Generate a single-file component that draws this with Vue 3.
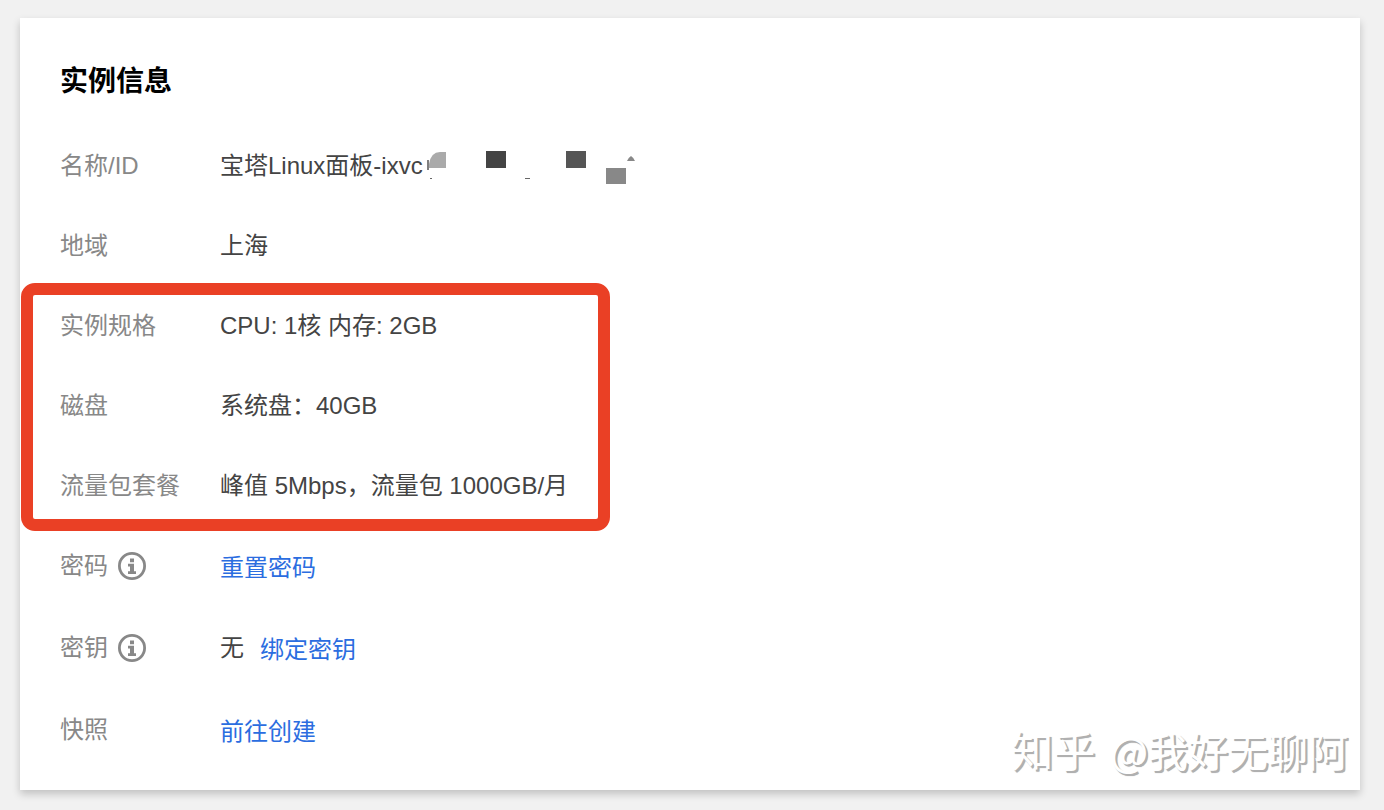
<template>
  <main class="page">
    <section class="instance-card">
      <h2>实例信息</h2>

      <div class="info-list">
        <dl v-for="(group, index) in groups" :key="index" class="info-group" :class="{ highlighted: group.highlighted }">
          <div v-for="item in group.items" :key="item.label" class="info-row">
            <dt>
              <span>{{ item.label }}</span>
              <button v-if="item.tip" type="button" class="btn-tip" :aria-label="`${item.label}说明`">
                <svg viewBox="0 0 28 28" width="28" height="28" aria-hidden="true">
                  <circle cx="14" cy="14" r="12.6" fill="none" stroke="currentColor" stroke-width="2.8" />
                  <path d="M12 6.500h4v3.800h-4zM10 11.800h6v7.400h2V22h-8v-2.800h2v-4.600h-2z" fill="currentColor" />
                </svg>
              </button>
            </dt>
            <dd>
              <span v-if="item.value">{{ item.value }}</span>
              <!-- 打码的实例 ID -->
              <svg v-if="item.masked" class="mask" viewBox="1 1 212 40" width="212" height="40" aria-hidden="true">
                <path d="M2 15v10" stroke="#555" stroke-width="1.5" />
                <path d="M3 23V19Q5 7 14 7h6v16z" fill="#aaa" />
                <path d="M60 6h20v17H60z" fill="#444" />
                <path d="M140 6h20v17h-20z" fill="#555" />
                <path d="M180 23h20v16h-20z" fill="#888" />
                <path d="M201 16q1-3 4-5q3 2 4 5z" fill="#888" />
                <path d="M4 33.500h2M99 33.500h5" stroke="#666" stroke-width="1" />
              </svg>
              <a v-if="item.link" href="#">{{ item.link }}</a>
            </dd>
          </div>
        </dl>
      </div>

      <div class="watermark"><span class="brand">知乎</span> @我好无聊阿</div>
    </section>
  </main>
</template>

<script setup>
const groups = [
  {
    items: [
      { label: '名称/ID', value: '宝塔Linux面板-ixvc', masked: true },
      { label: '地域', value: '上海' }
    ]
  },
  {
    highlighted: true,
    items: [
      { label: '实例规格', value: 'CPU: 1核 内存: 2GB' },
      { label: '磁盘', value: '系统盘：40GB' },
      { label: '流量包套餐', value: '峰值 5Mbps，流量包 1000GB/月' }
    ]
  },
  {
    items: [
      { label: '密码', tip: true, link: '重置密码' },
      { label: '密钥', tip: true, value: '无', link: '绑定密钥' },
      { label: '快照', link: '前往创建' }
    ]
  }
]
</script>

<style>
body {
  background: #f1f1f1;
}
</style>

<style scoped>
.page {
  padding: 18px 24px 20px 20px;
  font-family: "Liberation Sans", "Noto Sans CJK SC", sans-serif;
  font-size: 24px;
  line-height: 40px;
  color: #444;
}

.instance-card {
  position: relative;
  padding: 44px 40px 38px;
  background: white;
  box-shadow: 0 4px 8px rgba(0, 0, 0, 0.2);
}

h2 {
  margin: 0 0 44px;
  color: #000;
  font-size: 28px;
  font-weight: 700;
  line-height: 40px;
}

.info-list,
.info-group {
  display: flex;
  flex-direction: column;
  gap: 40px;
  margin: 0;
}

.info-group {
  position: relative;
}

/* 红色标注框 */
.highlighted::before {
  content: "";
  position: absolute;
  top: -23px;
  bottom: -25px;
  left: -39px;
  width: 589px;
  box-sizing: border-box;
  border: 12px solid #ea4025;
  border-radius: 14px;
  pointer-events: none;
}

.info-row {
  display: grid;
  grid-template-columns: 160px 1fr;
  align-items: start;
}

dt {
  display: flex;
  align-items: center;
  gap: 10px;
  color: #888;
}

dd {
  display: flex;
  margin: 0;
  white-space: nowrap;
}

.btn-tip {
  display: flex;
  padding: 0;
  border: none;
  background: none;
  color: #888;
  cursor: pointer;
}

.mask {
  margin-left: 4px;
}

a {
  padding-top: 2px;
  color: #2b6de0;
  text-decoration: none;
}

a:hover {
  text-decoration: underline;
}

dd span + a {
  margin-left: 16px;
}

.watermark {
  position: absolute;
  right: 12px;
  bottom: 14px;
  color: white;
  font-family: "Noto Sans CJK SC", sans-serif;
  font-size: 40px;
  line-height: 52px;
  text-shadow: 2px 2px 0 #b0b0b0, 2px 2px 1px #b0b0b0;
  white-space: nowrap;
}

.brand {
  margin-right: 6px;
  font-size: 42px;
}
</style>
